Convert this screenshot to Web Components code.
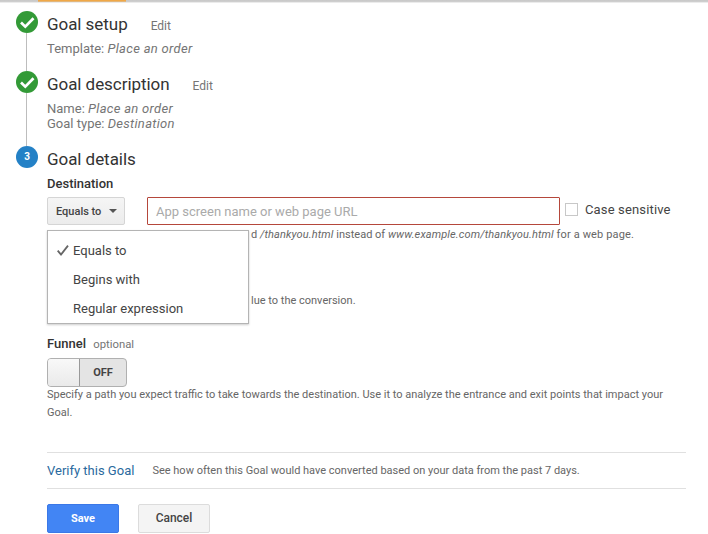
<!DOCTYPE html>
<html>
<head>
<meta charset="utf-8">
<style>
    html, body { margin: 0; padding: 0; background: #fff; }
    body { font-family: Roboto, "Liberation Sans", sans-serif; color: #333; overflow: hidden; height: 534px; }
    .sub { color: #757575; font-size: 13px; line-height: 15px; padding-top: 6px; }
    .sub i { letter-spacing: .3px; }
</style>
</head>
<body>
<top-bar></top-bar>
<goal-step state="done" title="Goal setup" edit="Edit" pad="68" first>
    <div class="sub">Template: <i>Place an order</i></div>
</goal-step>
<goal-step state="done" title="Goal description" edit="Edit" pad="75">
    <div class="sub">Name: <i>Place an order</i><br>Goal type: <i>Destination</i></div>
</goal-step>
<goal-step state="3" title="Goal details" last>
    <goal-details></goal-details>
</goal-step>

<script>
class TopBar extends HTMLElement {
    constructor() {
        super();
        this.attachShadow({ mode: "open" });
        this.shadowRoot.innerHTML = `
        <style>
            :host { display: block; height: 3px; background: linear-gradient(#c8c8c8, #cfcfcf 60%, #fff); padding-left: 38px; }
            div { width: 88px; height: 2px; background: linear-gradient(#f0a847 60%, rgba(240,168,71,0)); }
        </style>
        <div></div>`;
    }
}
customElements.define("top-bar", TopBar);

class GoalStep extends HTMLElement {
    constructor() {
        super();
        this.attachShadow({ mode: "open" });
    }

    connectedCallback() {
        var state = this.getAttribute("state");
        var last = this.hasAttribute("last");
        var first = this.hasAttribute("first");
        var pad = this.getAttribute("pad");
        var edit = this.getAttribute("edit");
        var icon = state == "done"
            ? `<svg width="22" height="22" viewBox="0 0 22 22"><circle cx="11" cy="11" r="11" fill="#339a37"/><path d="M5 11.5l4.3 4.2 8.2-8.4" fill="none" stroke="#fff" stroke-width="2.7"/></svg>`
            : `<div class="num">${state}</div>`;
        this.shadowRoot.innerHTML = `
        <style>
            :host { display: flex; padding-left: 16px; ${pad ? "height:" + pad + "px;" : ""} }
            .rail { width: 22px; margin-right: 9px; display: flex; flex-direction: column; align-items: center; padding-top: ${first ? "8px" : "0"}; }
            .rail svg, .num { flex: none; display: block; }
            .num { width: 22px; height: 22px; border-radius: 50%; background: #2481c6; color: #fff; font-size: 10px; font-weight: 700; line-height: 22px; text-align: center; }
            .line { flex: 1; width: 1px; background: #bdbdbd; margin-left: -1px; }
            .main { flex: 1; min-width: 0; padding-top: ${first ? "11px" : "3px"}; }
            .head { display: flex; align-items: baseline; height: 21px; }
            .title { font-size: 17px; line-height: 21px; color: #333; letter-spacing: -.05px; }
            .edit { font-size: 12px; color: #757575; margin-left: 23px; }
        </style>
        <div class="rail">${icon}${last ? "" : '<div class="line"></div>'}</div>
        <div class="main">
            <div class="head"><span class="title">${this.getAttribute("title")}</span>${edit ? `<span class="edit">${edit}</span>` : ""}</div>
            <slot></slot>
        </div>`;
    }
}
customElements.define("goal-step", GoalStep);

class GoalToggle extends HTMLElement {
    constructor() {
        super();
        this.attachShadow({ mode: "open" });
        this.shadowRoot.innerHTML = `
        <style>
            :host { display: flex; width: 80px; height: 29px; box-sizing: border-box; border: 1px solid #b0b0b0; border-radius: 4px; background: #e4e4e4; font-size: 11px; font-weight: 700; color: #444; overflow: hidden; }
            .knob { width: 31px; background: linear-gradient(#f8f8f8, #eaeaea); border-right: 1px solid #999; }
            .lbl { flex: 1; text-align: center; line-height: 27px; }
        </style>
        <div class="knob"></div><div class="lbl">OFF</div>`;
    }
}
customElements.define("goal-toggle", GoalToggle);

class GoalMenu extends HTMLElement {
    constructor() {
        super();
        this.attachShadow({ mode: "open" });
        this.shadowRoot.innerHTML = `
        <style>
            :host { display: block; position: absolute; left: 0; top: 33px; width: 202px; height: 94px; box-sizing: border-box; background: #fff; border: 1px solid #b4b4b4; box-shadow: 0 1px 2px rgba(0,0,0,.2); padding-top: 5px; font-size: 13px; color: #444; }
            div { position: relative; height: 29px; line-height: 29px; padding-left: 25px; }
            svg { position: absolute; left: 9px; top: 8px; }
        </style>
        <div><svg width="12" height="13" viewBox="0 0 12 13"><path d="M.7 6.6L4 10.6 11 1.6" fill="none" stroke="#666" stroke-width="1.8"/></svg>Equals to</div>
        <div>Begins with</div>
        <div>Regular expression</div>`;
    }
}
customElements.define("goal-menu", GoalMenu);

class GoalDetails extends HTMLElement {
    constructor() {
        super();
        this.attachShadow({ mode: "open" });
        this.shadowRoot.innerHTML = `
        <style>
            :host { display: block; width: 639px; font-size: 11px; color: #666; padding-top: 6px; }
            .label { font-size: 13px; font-weight: 500; color: #333; line-height: 16px; }
            .label span { font-size: 11.3px; font-weight: 400; color: #757575; margin-left: 4px; }
            .row { position: relative; display: flex; align-items: flex-start; margin-top: 5px; }
            .select { width: 78px; height: 28px; box-sizing: border-box; border: 1px solid #d5d5d5; border-radius: 2px; background: linear-gradient(#f5f5f5, #ececec); font-size: 11px; font-weight: 500; color: #444; display: flex; align-items: center; padding-left: 8px; gap: 8px; }
            .select i { border: 4px solid transparent; border-top-color: #555; border-bottom: 0; }
            .input { width: 413px; height: 28px; box-sizing: border-box; border: 1px solid #b5473b; border-radius: 1px; margin-left: 22px; padding-left: 8px; font-size: 13px; line-height: 28px; color: #aaa; }
            .box { width: 13px; height: 13px; box-sizing: border-box; border: 1px solid #c8c8c8; margin: 6px 7px 0 5px; }
            .case { font-size: 13px; color: #444; line-height: 25px; letter-spacing: .15px; }
            .help { line-height: 18px; }
            .help i { letter-spacing: .12px; }
            .help em { font-style: normal; letter-spacing: .15px; }
            .past { padding-left: 204px; }
            .rule { border-top: 1px solid #e0e0e0; }
            .verify { height: 35px; display: flex; align-items: center; }
            .verify a { font-size: 13px; color: #2a6a9e; margin-right: 18px; }
            .btns { display: flex; gap: 19px; margin-top: 15px; }
            .btn { width: 72px; height: 29px; box-sizing: border-box; border-radius: 2px; font-size: 11px; font-weight: 700; line-height: 27px; text-align: center; }
            .save { background: #4285f4; border: 1px solid #3b78e7; color: #fff; }
            .cancel { background: #f4f4f4; border: 1px solid #dcdcdc; color: #444; font-size: 12px; font-weight: 500; }
        </style>
        <div class="label">Destination</div>
        <div class="row">
            <div class="select">Equals to <i></i></div>
            <div class="input">App screen name or web page URL</div>
            <div class="box"></div>
            <div class="case">Case sensitive</div>
            <goal-menu></goal-menu>
        </div>
        <div class="help past" style="margin-top:1px">d <i>/thankyou.html</i> instead of <i>www.example.com/thankyou.html</i> <em>for a web page.</em></div>
        <div class="help past" style="margin-top:48px">lue to the conversion.</div>
        <div class="label" style="margin-top:26px">Funnel <span>optional</span></div>
        <goal-toggle style="margin-top:5px"></goal-toggle>
        <div class="help" style="margin-top:-1px">Specify a path you expect traffic to take towards the destination. Use it to analyze the entrance and exit points that impact your Goal.</div>
        <div class="rule" style="margin-top:30px"></div>
        <div class="verify"><a>Verify this Goal</a><span>See how often this Goal would have converted based on your data from the past 7 days.</span></div>
        <div class="rule"></div>
        <div class="btns"><div class="btn save">Save</div><div class="btn cancel">Cancel</div></div>`;
    }
}
customElements.define("goal-details", GoalDetails);
</script>
</body>
</html>
